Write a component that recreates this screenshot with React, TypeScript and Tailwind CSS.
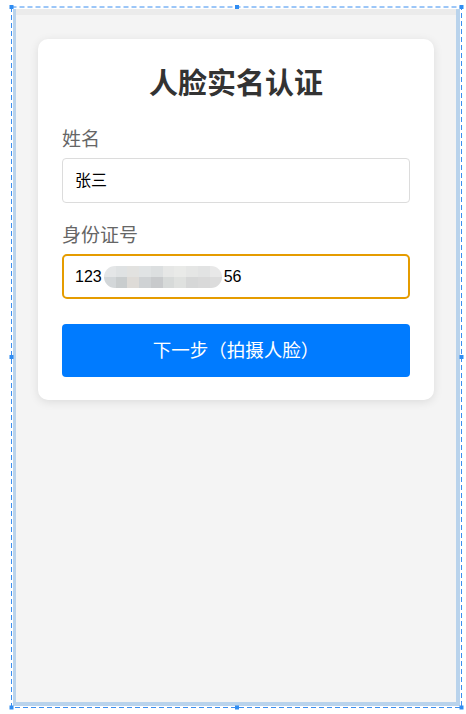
import React from "react";

const FONT = '"Liberation Sans", "Noto Sans CJK SC", sans-serif';

// pixelated blur that hides the middle of the id number
const MOSAIC_TOP = ["#e4e6e7", "#dfe2e3", "#e2e2e0", "#e0e3e4", "#dcdfe0", "#e6e7e6", "#e9eae8", "#e5e6e5", "#e2e3e3", "#e8e8e8"];
const MOSAIC_BOTTOM = ["#d3d7d9", "#c9cdce", "#dedbd7", "#cfd2d4", "#c8cacc", "#d7dad9", "#dfe1df", "#d6d7d7", "#d9d9d9", "#dcdcdc"];

function Mosaic() {
  return (
    <span className="inline-flex flex-col w-[118px] h-[22px] mx-[2px] rounded-full overflow-hidden align-middle blur-[0.6px]">
      <span className="flex h-1/2">
        {MOSAIC_TOP.map((c, i) => (
          <span key={i} className="flex-1" style={{ backgroundColor: c }} />
        ))}
      </span>
      <span className="flex h-1/2">
        {MOSAIC_BOTTOM.map((c, i) => (
          <span key={i} className="flex-1" style={{ backgroundColor: c }} />
        ))}
      </span>
    </span>
  );
}

function Selection() {
  const handles = [
    [11.5, 7], [237, 7], [461.5, 7],
    [11.5, 357], [461.5, 357],
    [11.5, 707.5], [237, 707.5], [461.5, 707.5],
  ];
  return (
    <svg className="absolute inset-0 pointer-events-none" width="466" height="714">
      <rect x="11.5" y="7" width="450" height="700.5" fill="none" stroke="#3a8ef0" strokeWidth="1" strokeDasharray="5 3" />
      {handles.map(([x, y], i) => (
        <rect key={i} x={x - 2} y={y - 2} width="4" height="4" fill="#2f8cf2" />
      ))}
    </svg>
  );
}

export default function App() {
  return (
    <div className="relative w-[466px] h-[714px] bg-white pt-[9px] pl-[13px]" style={{ fontFamily: FONT }}>
      <div className="flex flex-col w-[447px] h-[697px] border-l-[3px] border-r-[4px] border-b-[4px] border-[#b9d3ec] bg-[#f4f4f4]">
        <div className="h-[6px] bg-[#ebebeb]" />
        <div className="px-[22px] pt-[24px]">
          <div className="bg-white rounded-[10px] shadow-[0_2px_10px_rgba(0,0,0,0.1)] px-6 pt-[27px] pb-[23px]">
            <h1 className="text-center text-[29px] leading-[36px] font-bold text-[#333]">人脸实名认证</h1>

            <label className="block mt-[26px] mb-[6px] text-[19px] leading-[24px] text-[#666]">姓名</label>
            <div className="h-[45px] flex items-center border border-[#dcdcdc] rounded-[4px] pl-3 text-[16px] text-black">张三</div>

            <label className="block mt-[21px] mb-[6px] text-[19px] leading-[24px] text-[#666]">身份证号</label>
            <div className="h-[45px] flex items-center border-2 border-[#e59c00] rounded-[5px] pl-[11px] text-[16px] text-black">
              <span>123</span>
              <Mosaic />
              <span>56</span>
            </div>

            <button className="mt-[25px] w-full h-[53px] rounded-[4px] bg-[#007bff] text-white text-[18.5px]">
              下一步（拍摄人脸）
            </button>
          </div>
        </div>
      </div>
      <Selection />
    </div>
  );
}
